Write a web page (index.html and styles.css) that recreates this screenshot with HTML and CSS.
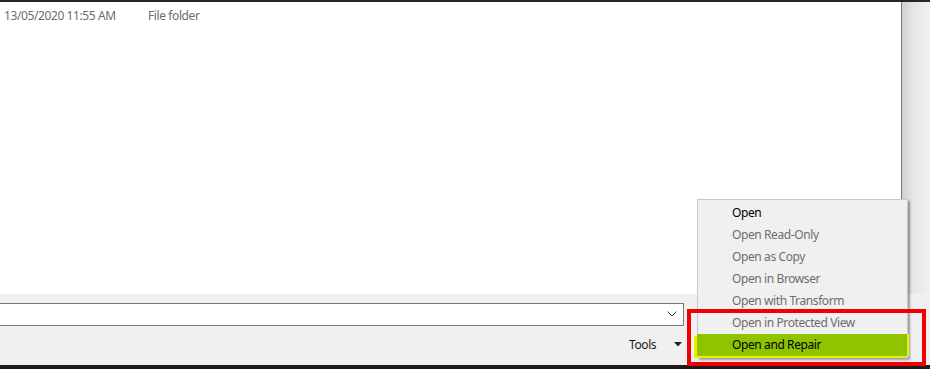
FILE: index.html
```html
<!DOCTYPE html>
<html>
<head>
<meta charset="utf-8">
<link rel="stylesheet" href="styles.css">
</head>
<body>
<div class="window">
  <div class="topline"></div>
  <div class="main">
    <div class="filelist">
      <div class="row">
        <span class="date">13/05/2020 11:55 AM</span>
        <span class="type">File folder</span>
      </div>
    </div>
    <div class="scrollbar"></div>
  </div>
  <div class="bottom">
    <div class="inputrow">
      <div class="combo">
        <svg class="chev" width="10" height="6" viewBox="0 0 10 6"><path d="M0.5 0.5 L5 5 L9.5 0.5" fill="none" stroke="#444" stroke-width="1"/></svg>
      </div>
    </div>
    <div class="toolsrow">
      <span class="tools">Tools</span>
      <svg class="tri" width="8" height="5" viewBox="0 0 8 5"><path d="M0 0 H8 L4 4.5 Z" fill="#222"/></svg>
    </div>
  </div>
  <div class="darkbar"></div>

  <div class="menu">
    <div class="item">Open</div>
    <div class="item dis">Open Read-Only</div>
    <div class="item dis">Open as Copy</div>
    <div class="item dis">Open in Browser</div>
    <div class="item dis">Open with Transform</div>
    <div class="item dis">Open in Protected View</div>
    <div class="item hl">Open and Repair</div>
  </div>
  <div class="redbox"></div>
</div>
</body>
</html>
```
FILE: styles.css
```css
html, body {
  margin: 0;
  padding: 0;
}
body {
  width: 930px;
  height: 369px;
  overflow: hidden;
  background: #f0f0f0;
  font-family: "Noto Sans", "Open Sans", sans-serif;
  font-size: 12px;
  letter-spacing: -0.4px;
}
.window {
  position: relative;
  width: 930px;
  height: 369px;
  display: flex;
  flex-direction: column;
}
.topline {
  height: 2px;
  background: #262626;
}
.main {
  height: 292px;
  display: flex;
}
.filelist {
  width: 901px;
  background: #fff;
  border-right: 1px solid #7b7b7b;
}
.row {
  display: flex;
  height: 26px;
  align-items: center;
  color: #6d6d6d;
  padding-left: 4px;
}
.date {
  width: 144px;
}
.scrollbar {
  flex: 1;
  background: linear-gradient(to right, #cfcfcf, #e6e6e6 40%, #f0f0f0);
}
.bottom {
  flex: 1;
  background: #f0f0f0;
  display: flex;
  flex-direction: column;
}
.inputrow {
  padding-top: 9px;
  display: flex;
}
.combo {
  width: 683px;
  height: 21px;
  background: #fff;
  border: 1px solid #7a7a7a;
  border-left: none;
  display: flex;
  justify-content: flex-end;
  align-items: center;
}
.chev {
  margin-right: 6px;
  margin-bottom: 2px;
}
.toolsrow {
  display: flex;
  align-items: center;
  height: 36px;
  padding-left: 629px;
  color: #1a1a1a;
}
.tools {
  width: 45px;
}
.tri {
  margin-top: 1px;
}
.darkbar {
  height: 4px;
  background: #1c1c1c;
}
.menu {
  position: absolute;
  left: 697px;
  top: 199px;
  width: 211px;
  height: 159px;
  background: #f0f0f0;
  border: 1px solid #c8c8c8;
  box-shadow: 2px 2px 2px rgba(0,0,0,0.35);
  padding-top: 2px;
  box-sizing: border-box;
}
.item {
  height: 22px;
  line-height: 22px;
  padding-left: 34px;
  color: #000;
}
.item.dis {
  color: #6d6d6d;
}
.item.hl {
  background: #8fc400;
  margin-left: -1px;
  margin-right: -2px;
  padding-left: 35px;
  border-right: 2px solid #e8f000;
  box-shadow: -3px 2px 0 #e8f000;
}
.redbox {
  position: absolute;
  left: 687px;
  top: 309px;
  width: 239px;
  height: 57px;
  border: 4px solid #f00000;
  box-sizing: border-box;
}
```
